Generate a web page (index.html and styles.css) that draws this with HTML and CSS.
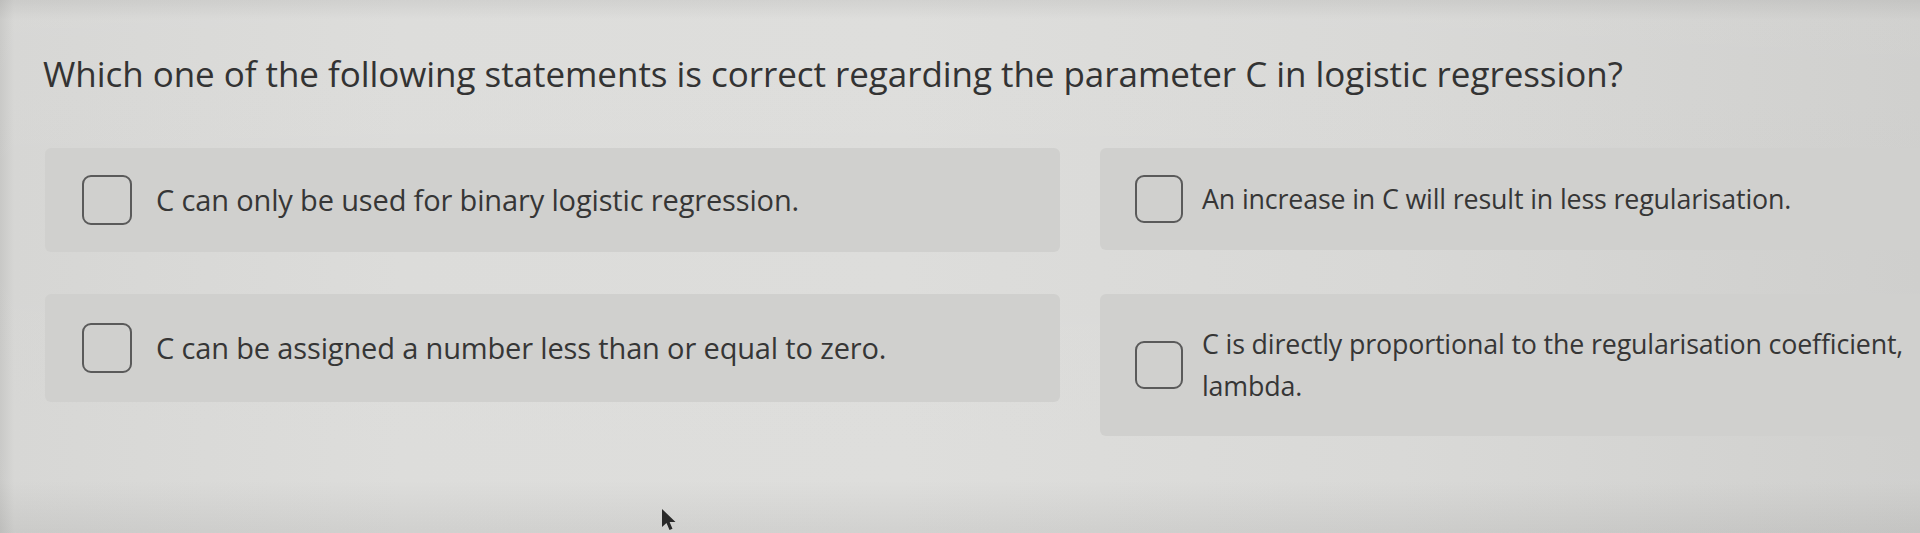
FILE: index.html
```html
<!DOCTYPE html>
<html lang="en">
<head>
<meta charset="utf-8">
<title>Quiz question</title>
<link rel="stylesheet" href="styles.css">
</head>
<body>
<main class="screen">
  <h1 class="question">Which one of the following statements is correct regarding the parameter C in logistic regression?</h1>
  <div class="options">
    <label class="option">
      <span class="box"></span>
      <span class="text">C can only be used for binary logistic regression.</span>
    </label>
    <label class="option option-right">
      <span class="box"></span>
      <span class="text">An increase in C will result in less regularisation.</span>
    </label>
    <label class="option option-low">
      <span class="box"></span>
      <span class="text">C can be assigned a number less than or equal to zero.</span>
    </label>
    <label class="option option-right option-low">
      <span class="box"></span>
      <span class="text">C is directly proportional to the regularisation coefficient, lambda.</span>
    </label>
  </div>
  <svg class="cursor" width="18" height="24" viewBox="0 0 18 24"><path d="M2 1 L2 19 L6.5 15 L9.5 22 L12.5 20.8 L9.6 14 L15.5 14 Z" fill="#2a2a2a"/></svg>
</main>
</body>
</html>
```
FILE: styles.css
```css
html, body {
  margin: 0;
  padding: 0;
  width: 1920px;
  height: 533px;
  overflow: hidden;
}
body {
  font-family: "Open Sans", "Liberation Sans", sans-serif;
  color: #363636;
  background: linear-gradient(90deg, #c8c8c6 0px, #d6d6d4 14px, #dcdcda 400px, #dddddb 900px, #d8d8d6 1400px, #cfcfcd 1920px);
}
.screen {
  position: relative;
  height: 533px;
  box-sizing: border-box;
  padding: 52px 0 0 43px;
  background: linear-gradient(180deg, rgba(0,0,0,0.05) 0px, rgba(255,255,255,0.04) 20px, rgba(255,255,255,0) 200px, rgba(255,255,255,0.03) 480px, rgba(0,0,0,0.05) 530px);
}
.question {
  margin: 0;
  font-size: 35px;
  font-weight: 400;
  line-height: 44px;
  letter-spacing: -0.05px;
  color: #333333;
  white-space: nowrap;
}
.options {
  margin-top: 52px;
  margin-left: 2px;
  display: grid;
  grid-template-columns: 1015px 1fr;
  column-gap: 40px;
  row-gap: 42px;
  align-items: start;
}
.option {
  display: flex;
  align-items: center;
  gap: 24px;
  padding: 27px 30px 27px 37px;
  background: #d0d0ce;
  border-radius: 6px;
}
.option-low {
  padding-top: 29px;
  padding-bottom: 29px;
}
.option-right {
  padding-left: 35px;
  padding-right: 0;
  gap: 19px;
  border-radius: 6px 0 0 6px;
}
.box {
  flex: none;
  width: 46px;
  height: 46px;
  border: 2px solid #5a5a5a;
  border-radius: 9px;
}
.option-right .box {
  width: 44px;
  height: 44px;
}
.text {
  font-size: 29px;
  line-height: 42px;
  letter-spacing: -0.15px;
  color: #363636;
}
.option-right .text {
  font-size: 26.8px;
  line-height: 42px;
  max-width: 715px;
}
.cursor {
  position: absolute;
  left: 660px;
  top: 508px;
}
```
